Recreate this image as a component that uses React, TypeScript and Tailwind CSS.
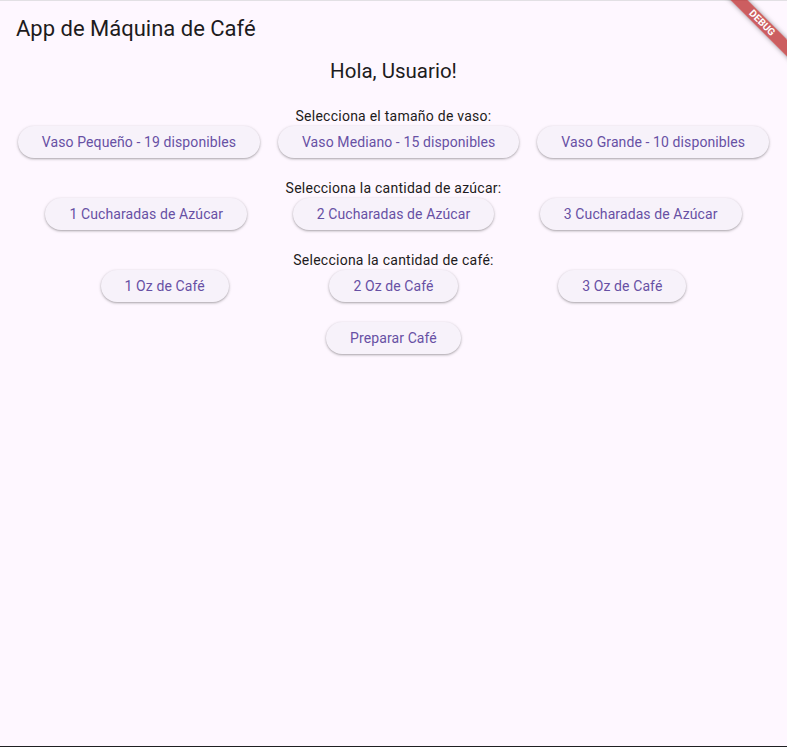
import React from "react";

const font = { fontFamily: "Roboto, 'Noto Sans', sans-serif" };

const PillButton = ({ label }: { label: string }) => {
  return (
    <button className="h-8 px-6 rounded-full bg-[#f7f2fa] text-[#6750a4] text-sm font-normal tracking-[0.1px] leading-5 shadow-[0_1px_2px_rgba(0,0,0,0.25),0_1px_3px_1px_rgba(0,0,0,0.08)] whitespace-nowrap">
      {label}
    </button>
  );
};

const Section = ({ title, options }: { title: string; options: string[] }) => {
  return (
    <div className="flex flex-col items-center w-full">
      <p className="text-sm leading-5 tracking-[0.25px] text-[#1d1b20]">{title}</p>
      <div className="flex w-full justify-evenly">
        {options.map((o) => (
          <PillButton key={o} label={o} />
        ))}
      </div>
    </div>
  );
};

const App = () => {
  return (
    <div
      style={font}
      className="relative w-full h-[747px] overflow-hidden bg-[#fef7ff] flex flex-col border-b border-[#1f1f22]"
    >
      <header className="h-14 shrink-0 flex items-center pl-4 border-t border-[#e2e0e4]">
        <h1 className="text-[22px] leading-7 text-[#1d1b20]">App de Máquina de Café</h1>
      </header>

      <div className="flex flex-col items-center">
        <h2 className="text-[20.5px] leading-7 pt-[1px] text-[#1d1b20]">Hola, Usuario!</h2>

        <div className="mt-[21px] w-full">
          <Section
            title="Selecciona el tamaño de vaso:"
            options={[
              "Vaso Pequeño - 19 disponibles",
              "Vaso Mediano - 15 disponibles",
              "Vaso Grande - 10 disponibles",
            ]}
          />
        </div>

        <div className="mt-5 w-full">
          <Section
            title="Selecciona la cantidad de azúcar:"
            options={[
              "1 Cucharadas de Azúcar",
              "2 Cucharadas de Azúcar",
              "3 Cucharadas de Azúcar",
            ]}
          />
        </div>

        <div className="mt-5 w-full">
          <Section
            title="Selecciona la cantidad de café:"
            options={["1 Oz de Café", "2 Oz de Café", "3 Oz de Café"]}
          />
        </div>

        <div className="mt-5">
          <PillButton label="Preparar Café" />
        </div>
      </div>

      {/* debug banner */}
      <div className="absolute left-[704px] top-[17px] w-[116px] h-3 rotate-45 bg-[rgba(183,28,28,0.7)] shadow-[0_0_5px_rgba(0,0,0,0.4)] flex items-center justify-center">
        <span className="text-[10px] leading-none font-bold text-white">DEBUG</span>
      </div>
    </div>
  );
};

export default App;
